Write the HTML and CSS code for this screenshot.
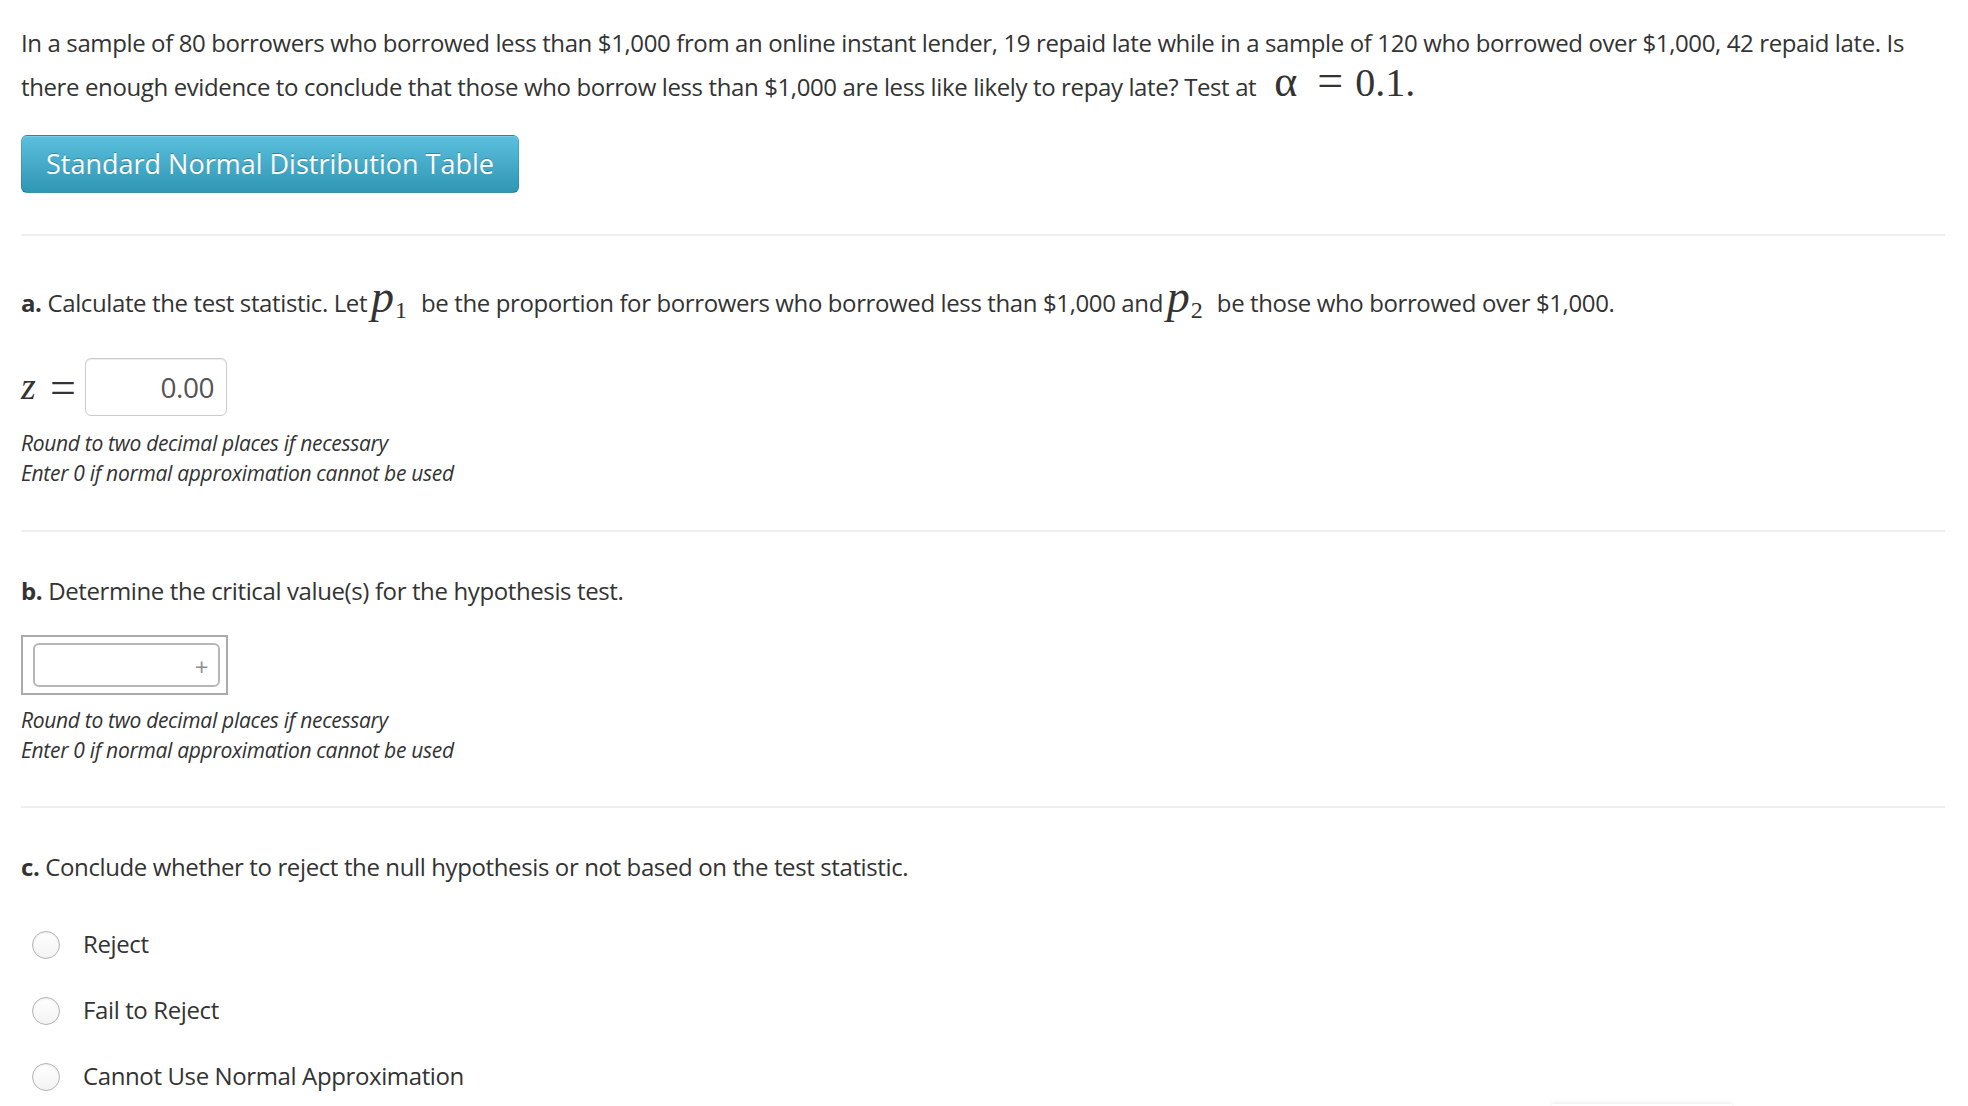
FILE: index.html
```html
<!DOCTYPE html>
<html lang="en">
<head>
<meta charset="utf-8">
<title>Hypothesis test</title>
<link rel="stylesheet" href="styles.css">
</head>
<body>
<main class="page">
  <p class="prompt">In a sample of 80 borrowers who borrowed less than $1,000 from an online instant lender, 19 repaid late while in a sample of 120 who borrowed over $1,000, 42 repaid late. Is there enough evidence to conclude that those who borrow less than $1,000 are less like likely to repay late? Test at <span class="m-alpha">α</span><span class="m-eq">=</span><span class="m-num">0.1.</span></p>
  <button class="btn-info" type="button">Standard Normal Distribution Table</button>
  <hr class="rule">

  <section class="part part-a">
    <p class="question"><b>a.</b> Calculate the test statistic. Let <span class="mvar">p<sub>1</sub></span>be the proportion for borrowers who borrowed less than $1,000 and <span class="mvar">p<sub>2</sub></span>be those who borrowed over $1,000.</p>
    <div class="answer-row">
      <span class="mz">z</span><span class="meq">=</span>
      <input class="num" type="text" value="0.00">
    </div>
    <p class="hint">Round to two decimal places if necessary<br>Enter 0 if normal approximation cannot be used</p>
  </section>
  <hr class="rule rule-b">

  <section class="part">
    <p class="question"><b>b.</b> Determine the critical value(s) for the hypothesis test.</p>
    <div class="multi-box">
      <div class="multi-inner"><span class="plus">+</span></div>
    </div>
    <p class="hint">Round to two decimal places if necessary<br>Enter 0 if normal approximation cannot be used</p>
  </section>
  <hr class="rule rule-c">

  <section class="part">
    <p class="question"><b>c.</b> Conclude whether to reject the null hypothesis or not based on the test statistic.</p>
    <ul class="options">
      <li class="option"><span class="radio"></span><span>Reject</span></li>
      <li class="option"><span class="radio"></span><span>Fail to Reject</span></li>
      <li class="option"><span class="radio"></span><span>Cannot Use Normal Approximation</span></li>
    </ul>
  </section>
</main>
<div class="float-shadow"></div>
</body>
</html>
```

FILE: styles.css
```css
html, body {
  margin: 0;
  padding: 0;
  background: #fff;
}
body {
  font-family: "Open Sans", "Noto Sans", sans-serif;
  color: #333;
  font-size: 24px;
  letter-spacing: -0.38px;
  overflow: hidden;
}
.page {
  padding: 21px 23px 0 21px;
}
.prompt {
  margin: 0;
  line-height: 44px;
}
.m-alpha,
.m-eq,
.m-num {
  font-family: "Liberation Serif", "DejaVu Serif", serif;
  letter-spacing: 0;
  line-height: 0;
}
.m-alpha {
  font-size: 44px;
  margin-left: 12px;
  margin-right: 20px;
}
.m-eq {
  font-size: 46px;
  margin-right: 12px;
}
.m-num {
  font-size: 40px;
}
.btn-info {
  display: block;
  margin-top: 26px;
  height: 58px;
  width: 498px;
  padding: 0 0 2px 0;
  font-family: "Open Sans", "Noto Sans", sans-serif;
  font-size: 27px;
  letter-spacing: 0;
  color: #fff;
  text-shadow: 0 -1px 0 rgba(0,0,0,0.25);
  background-image: linear-gradient(to bottom, #5bc0de, #2f96b4);
  border: 1px solid #2a85a0;
  border-color: rgba(0,0,0,0.1) rgba(0,0,0,0.1) rgba(0,0,0,0.25);
  border-radius: 6px;
  box-shadow: inset 0 1px 0 rgba(255,255,255,0.2), 0 1px 2px rgba(0,0,0,0.05);
  cursor: pointer;
}
.rule {
  margin: 41px 0 0 0;
  height: 2px;
  border: 0;
  background: #eeeeee;
}
.rule-b {
  margin-top: 42px;
}
.part-a .question {
  margin-top: 45px;
}
.question {
  margin: 37px 0 0 0;
  line-height: 44px;
}
.question b {
  font-weight: 700;
}
.mvar {
  font-family: "Liberation Serif", "DejaVu Serif", serif;
  font-style: italic;
  font-size: 46px;
  letter-spacing: 0;
  line-height: 0;
  margin-left: -2px;
  margin-right: 14px;
}
.mvar sub {
  font-style: normal;
  font-size: 24px;
  vertical-align: -6px;
  line-height: 0;
  margin-left: 1px;
}
.answer-row {
  display: flex;
  align-items: center;
  margin-top: 33px;
  height: 58px;
}
.mz {
  font-family: "Liberation Serif", "DejaVu Serif", serif;
  font-style: italic;
  font-size: 38px;
  width: 29px;
  margin-top: -2px;
}
.meq {
  font-family: "Liberation Serif", "DejaVu Serif", serif;
  font-size: 46px;
  width: 35px;
  letter-spacing: 0;
}
.num {
  box-sizing: border-box;
  width: 142px;
  height: 58px;
  padding: 0 12px 0 8px;
  text-align: right;
  font-family: "Open Sans", "Noto Sans", sans-serif;
  font-size: 28px;
  letter-spacing: -0.5px;
  color: #555;
  border: 1px solid #cccccc;
  border-radius: 6px;
  box-shadow: inset 0 1px 1px rgba(0,0,0,0.075);
  outline: none;
}
.hint {
  margin: 12px 0 0 0;
  font-style: italic;
  font-size: 21px;
  letter-spacing: -0.3px;
  line-height: 30px;
}
.part .multi-box + .hint {
  margin-top: 10px;
}
.multi-box {
  margin-top: 22px;
  box-sizing: border-box;
  width: 207px;
  height: 60px;
  border: 2px solid #ababab;
  padding: 6px 6px 6px 10px;
}
.multi-inner {
  box-sizing: border-box;
  height: 44px;
  border: 2px solid #b7b7b7;
  border-radius: 6px;
  display: flex;
  align-items: center;
  justify-content: flex-end;
  padding-right: 10px;
}
.plus {
  color: #8e8e8e;
  font-size: 24px;
  line-height: 1;
  margin-top: 4px;
}
.options {
  list-style: none;
  margin: 21px 0 0 0;
  padding: 0;
}
.option {
  display: flex;
  align-items: center;
  height: 66px;
  font-size: 24px;
}
.radio {
  box-sizing: border-box;
  width: 28px;
  height: 28px;
  border-radius: 50%;
  border: 1px solid #b4b4b4;
  background: linear-gradient(to bottom, #ffffff, #f3f3f3);
  box-shadow: inset 0 1px 2px rgba(0,0,0,0.08);
  margin-left: 11px;
  margin-right: 23px;
  margin-top: 4px;
}
.float-shadow {
  position: fixed;
  left: 1552px;
  top: 1104px;
  width: 180px;
  height: 30px;
  background: #fff;
  box-shadow: 0 -1px 4px rgba(0,0,0,0.08);
}
```
